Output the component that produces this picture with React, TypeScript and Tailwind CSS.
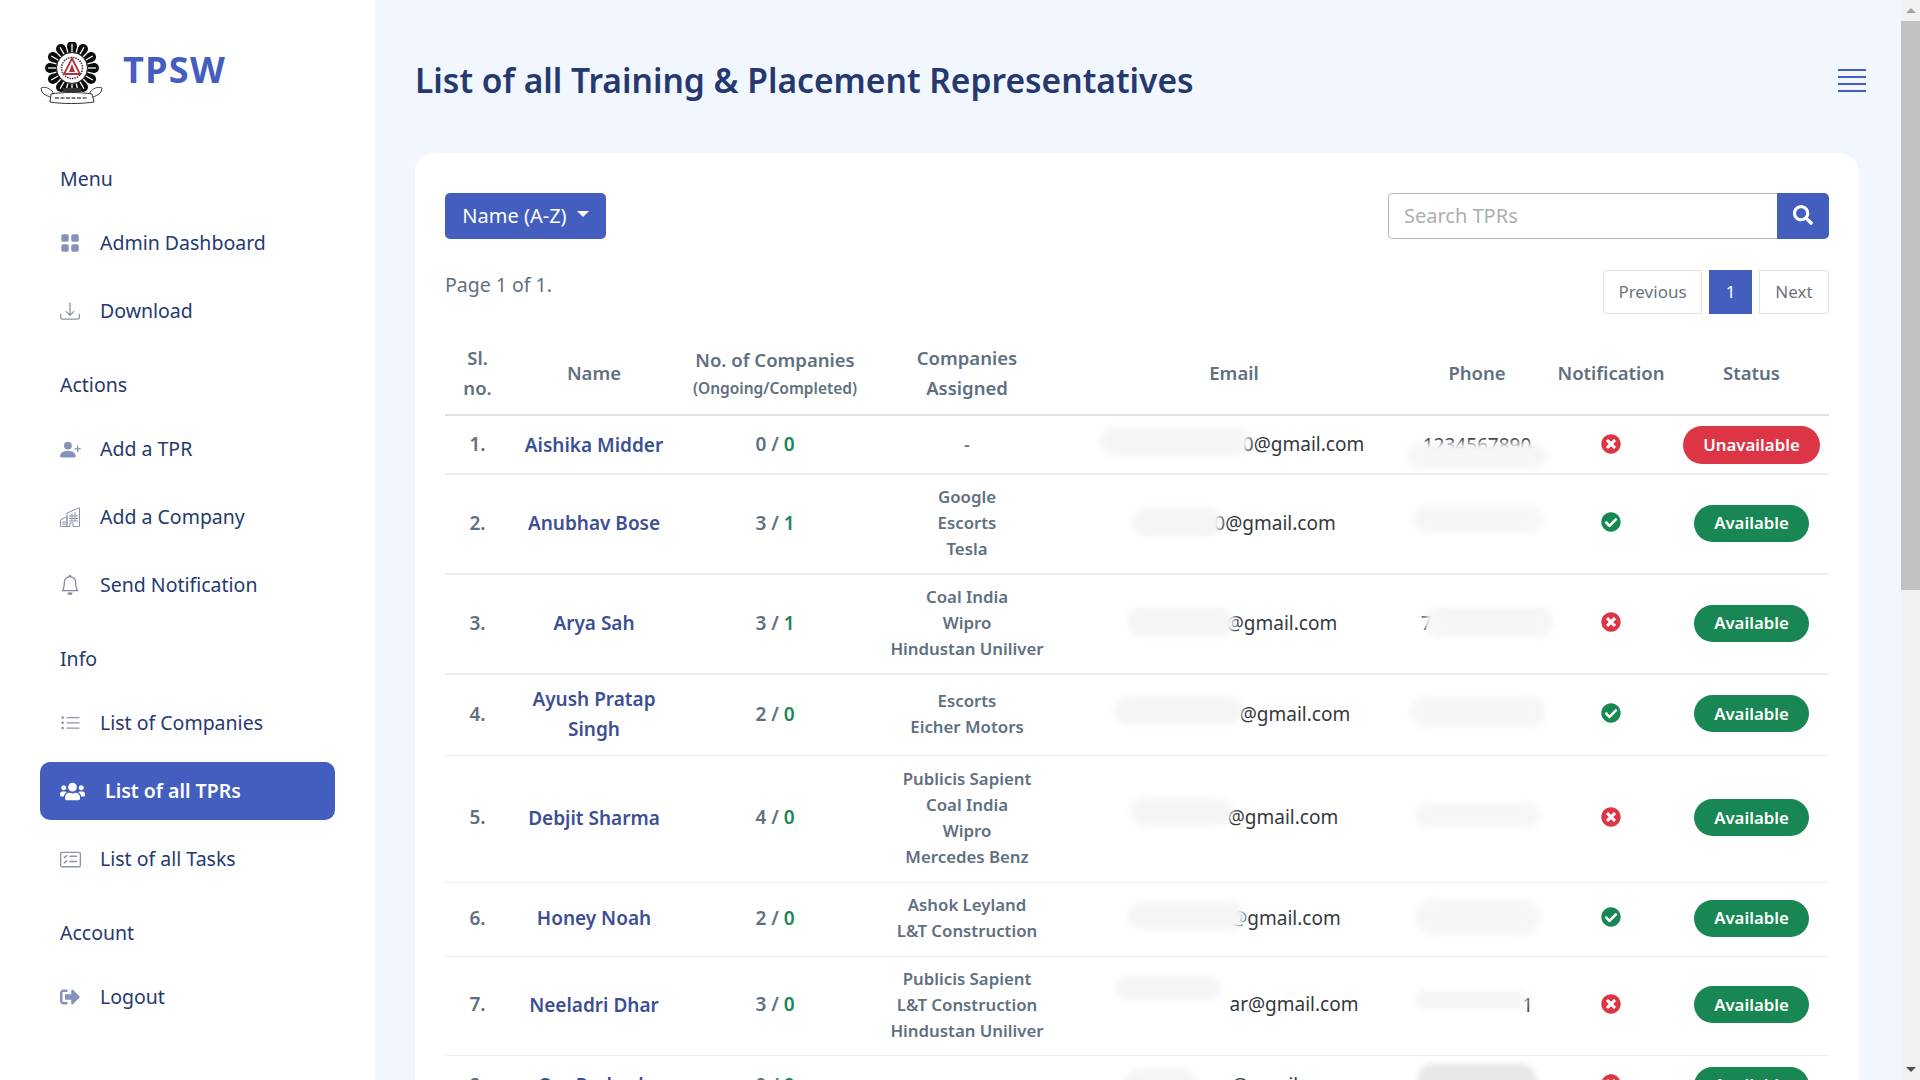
import { FaCheckCircle, FaSearch, FaSignOutAlt, FaTimesCircle, FaUsers } from 'react-icons/fa';
import { BsBell, BsCardChecklist, BsDownload, BsGridFill, BsListUl, BsPersonPlusFill } from 'react-icons/bs';

const font = "font-['Noto_Sans',sans-serif]";

function Logo() {
    const bumps = Array.from({ length: 12 }, (_, i) => (i * Math.PI) / 6);
    const spokes = Array.from({ length: 24 }, (_, i) => (i * Math.PI) / 12);
    return (
        <svg width="63" height="63" viewBox="0 0 63 63" className="shrink-0">
            {bumps.map((a) => (
                <circle key={a} cx={32 + 22 * Math.cos(a)} cy={26 + 22 * Math.sin(a)} r="5" fill="#0b0b0b" />
            ))}
            <circle cx="32" cy="26" r="22" fill="#0b0b0b" />
            {spokes.map((a) => (
                <line key={a} x1={32 + 16 * Math.cos(a)} y1={26 + 16 * Math.sin(a)} x2={32 + 24 * Math.cos(a)} y2={26 + 24 * Math.sin(a)} stroke="#fff" strokeWidth="1.3" />
            ))}
            <circle cx="32" cy="26" r="15.5" fill="#fff" stroke="#222" strokeWidth="1" />
            <circle cx="32" cy="26" r="10.5" fill="#fff" stroke="#444" strokeWidth="1.6" strokeDasharray="1.5 1" />
            <path d="M32 16.5 L40 32 H24 Z" fill="#fff" stroke="#b5303a" strokeWidth="1.8" />
            <path d="M32 22 L35 30 H29 Z" fill="#b5303a" />
            <path d="M23 46 H41 V50 H23 Z" fill="#333" />
            <path d="M1 46 C6 44 10 47 13 50 L12 56 C8 54 4 53 2 50 Z" fill="#fff" stroke="#333" strokeWidth="0.9" />
            <path d="M62 46 C57 44 53 47 50 50 L51 56 C55 54 59 53 61 50 Z" fill="#fff" stroke="#333" strokeWidth="0.9" />
            <path d="M11 52 C22 50 41 50 52 52 L54 60 C42 62 21 62 10 60 Z" fill="#fff" stroke="#333" strokeWidth="1" />
            <path d="M15 56 H48" stroke="#555" strokeWidth="1.6" strokeDasharray="4 1.5" />
        </svg>
    );
}

function BuildingIcon() {
    return (
        <svg width="20" height="20" viewBox="0 0 20 20" fill="none" stroke="#8b93ad" strokeWidth="1">
            <path d="M.5 19.5 V13 L7 9.5 V19.5 Z" />
            <path d="M7 19.5 V6 L19.5 .8 V19.5 H13 V16 H10 V19.5 Z" />
            <path d="M9 9 H18 M9 11.5 H18 M9 14 H18 M12 6 V14 M15 5 V14 M2 15 H6 M2 17 H6" />
        </svg>
    );
}

const menu = [
    {
        title: 'Menu',
        items: [
            { label: 'Admin Dashboard', icon: <BsGridFill size={20} className="text-[#8592bd]" /> },
            { label: 'Download', icon: <BsDownload size={20} className="text-[#8b93ad]" /> },
        ],
    },
    {
        title: 'Actions',
        items: [
            { label: 'Add a TPR', icon: <BsPersonPlusFill size={21} className="text-[#8592bd]" /> },
            { label: 'Add a Company', icon: <BuildingIcon /> },
            { label: 'Send Notification', icon: <BsBell size={20} className="text-[#7f879f]" /> },
        ],
    },
    {
        title: 'Info',
        items: [
            { label: 'List of Companies', icon: <BsListUl size={21} className="text-[#8b93ad]" /> },
            { label: 'List of all TPRs', active: true, icon: <FaUsers size={25} className="text-white" /> },
            { label: 'List of all Tasks', icon: <BsCardChecklist size={21} className="text-[#8b93ad]" /> },
        ],
    },
    {
        title: 'Account',
        items: [{ label: 'Logout', icon: <FaSignOutAlt size={20} className="text-[#8592bd]" /> }],
    },
];

function Sidebar() {
    return (
        <aside className="w-[375px] shrink-0 bg-white">
            <div className="h-[144px] flex items-start pl-10 pt-[42px] gap-5">
                <Logo />
                <div className="font-['Open_Sans',sans-serif] font-bold text-[36px] leading-[56px] tracking-[1.2px] text-[#435ebe]">TPSW</div>
            </div>
            {menu.map((s) => (
                <div key={s.title}>
                    <div className="h-[70px] flex items-center pl-[60px] text-[19.5px] text-[#25396f]">{s.title}</div>
                    {s.items.map((it) =>
                        it.active ? (
                            <div key={it.label} className="ml-10 w-[295px] h-[58px] mb-[10px] pl-5 flex items-center gap-5 rounded-[10px] bg-[#435ebe] text-white font-semibold text-[19.5px]">
                                {it.icon}
                                <span>{it.label}</span>
                            </div>
                        ) : (
                            <div key={it.label} className="ml-10 w-[295px] h-[58px] mb-[10px] pl-5 flex items-center text-[19.5px] text-[#25396f]">
                                <span className="w-10 flex items-center">{it.icon}</span>
                                <span>{it.label}</span>
                            </div>
                        ),
                    )}
                </div>
            ))}
        </aside>
    );
}

const rows = [
    { name: 'Aishika Midder', a: 0, b: 0, companies: ['-'], mail: '0@gmail.com', mailPad: 'pl-[139px]', mailBlot: 'w-[150px] -left-[4px] -top-[3px] h-[28px]', phone: '1234567890', phoneAlign: 'justify-center', phoneBlot: 'w-[140px] -left-[14px] top-[11px] h-[26px]', notify: false, available: false, h: 'h-[59px]', line: 'border-b-2' },
    { name: 'Anubhav Bose', a: 3, b: 1, companies: ['Google', 'Escorts', 'Tesla'], mail: '0@gmail.com', mailPad: 'pl-[82px]', mailBlot: 'w-[90px] left-0 -top-[2px] h-[30px]', phone: '', phoneAlign: 'justify-center', phoneBlot: 'w-[130px] -left-[8px] -top-[4px] h-[26px]', notify: true, available: true, h: 'h-[100px]', line: 'border-b-2 [&>td]:pb-[2px]' },
    { name: 'Arya Sah', a: 3, b: 1, companies: ['Coal India', 'Wipro', 'Hindustan Uniliver'], mail: '@gmail.com', mailPad: 'pl-[96px]', mailBlot: 'w-[108px] -left-[4px] -top-[2px] h-[30px]', phone: '7', phoneAlign: 'justify-start', phoneBlot: 'w-[130px] left-[3px] -top-[3px] h-[30px]', notify: false, available: true, h: 'h-[100px]', line: 'border-b-2 [&>td]:pb-[2px]' },
    { name: 'Ayush Pratap Singh', a: 2, b: 0, companies: ['Escorts', 'Eicher Motors'], mail: '@gmail.com', mailPad: 'pl-[122px]', mailBlot: 'w-[128px] -left-[4px] -top-[3px] h-[28px]', phone: '', phoneAlign: 'justify-center', phoneBlot: 'w-[135px] -left-[10px] -top-[4px] h-[30px]', notify: true, available: true, h: 'h-[81px]', line: 'border-b [&>td]:pb-[2px]' },
    { name: 'Debjit Sharma', a: 4, b: 0, companies: ['Publicis Sapient', 'Coal India', 'Wipro', 'Mercedes Benz'], mail: '@gmail.com', mailPad: 'pl-[98px]', mailBlot: 'w-[102px] left-0 -top-[5px] h-[28px]', phone: '', phoneAlign: 'justify-center', phoneBlot: 'w-[125px] -left-[6px] -top-[2px] h-[24px]', notify: false, available: true, h: 'h-[127px]', line: 'border-b [&>td]:pb-[2px]' },
    { name: 'Honey Noah', a: 2, b: 0, companies: ['Ashok Leyland', 'L&T Construction'], mail: '@gmail.com', mailPad: 'pl-[103px]', mailBlot: 'w-[118px] left-0 -top-[2px] h-[28px]', phone: '', phoneAlign: 'justify-center', phoneBlot: 'w-[125px] -left-[6px] -top-[6px] h-[36px]', notify: true, available: true, h: 'h-[74px]', line: 'border-b [&>td]:pb-[2px]' },
    { name: 'Neeladri Dhar', a: 3, b: 0, companies: ['Publicis Sapient', 'L&T Construction', 'Hindustan Uniliver'], mail: 'ar@gmail.com', mailPad: 'pl-[120px]', mailBlot: 'w-[105px] left-[6px] -top-[14px] h-[24px]', phone: '1', phoneAlign: 'justify-end', phoneBlot: 'w-[112px] -left-[6px] -top-[2px] h-[20px]', notify: false, available: true, h: 'h-[99px]', line: 'border-b [&>td]:pb-[2px]' },
    { name: 'Om Prakash', a: 0, b: 0, companies: ['-'], mail: '@gmail.com', mailPad: 'pl-[105px]', mailBlot: 'w-[70px] left-0 -top-[2px] h-[26px]', phone: '', phoneAlign: 'justify-center', phoneBlot: 'w-[120px] -left-[4px] -top-[8px] h-[34px] !bg-[#e6e6e8]', notify: false, available: true, h: 'h-[60px]', line: 'border-b' },
];

function TprTable() {
    return (
        <table className="w-full table-fixed border-collapse mt-4 text-[#607080]">
            <colgroup>
                <col className="w-[65px]" />
                <col className="w-[168px]" />
                <col className="w-[194px]" />
                <col className="w-[190px]" />
                <col className="w-[344px]" />
                <col className="w-[142px]" />
                <col className="w-[126px]" />
                <col className="w-[155px]" />
            </colgroup>
            <thead>
                <tr className="h-[85px] border-b-2 border-[#dee2e6] text-[18.5px] leading-[30px]">
                    <th className="pt-[2px] font-semibold">Sl.<br />no.</th>
                    <th className="pt-[2px] font-semibold">Name</th>
                    <th className="pt-[2px] font-semibold">No. of Companies<br /><span className="block text-[15.5px] leading-[26px]">(Ongoing/Completed)</span></th>
                    <th className="pt-[2px] font-semibold">Companies<br />Assigned</th>
                    <th className="pt-[2px] font-semibold">Email</th>
                    <th className="pt-[2px] font-semibold">Phone</th>
                    <th className="pt-[2px] font-semibold">Notification</th>
                    <th className="pt-[2px] font-semibold">Status</th>
                </tr>
            </thead>
            <tbody>
                {rows.map((r, i) => (
                    <tr key={r.name} className={`${r.h} ${r.line} border-[#eceef0] text-center align-middle`}>
                        <td className="text-[19px] font-semibold">{i + 1}.</td>
                        <td className="px-2 text-[19px] leading-[30px] font-semibold text-[#3d4f93]">{r.name}</td>
                        <td className="text-[19px] font-semibold">{r.a} / <span className="text-[#198754]">{r.b}</span></td>
                        <td className="text-[16.8px] leading-[26px] font-semibold">
                            {r.companies.map((c) => <div key={c}>{c}</div>)}
                        </td>
                        <td className="text-[19px] text-[#33383e]">
                            <span className={`relative inline-block ${r.mailPad}`}>
                                {r.mail}
                                <span className={`absolute rounded-full bg-[#f5f5f6] blur-[3px] ${r.mailBlot}`} />
                            </span>
                        </td>
                        <td className="text-[19px] text-[#33383e]">
                            <span className={`relative mx-auto flex w-[112px] h-[26px] leading-[26px] ${r.phoneAlign}`}>
                                {r.phone}
                                <span className={`absolute rounded-full bg-[#f6f6f8] blur-[3px] ${r.phoneBlot}`} />
                            </span>
                        </td>
                        <td>
                            <span className="flex justify-center -mt-[2px]">
                                {r.notify ? <FaCheckCircle size={20} className="text-[#198754]" /> : <FaTimesCircle size={20} className="text-[#dc3545]" />}
                            </span>
                        </td>
                        <td>
                            {r.available ? (
                                <span className="inline-flex items-center h-[37px] px-5 rounded-full bg-[#198754] text-white text-[16.8px] font-semibold">Available</span>
                            ) : (
                                <span className="inline-flex items-center h-[38px] px-5 rounded-full bg-[#dc3545] text-white text-[16.8px] font-semibold">Unavailable</span>
                            )}
                        </td>
                    </tr>
                ))}
            </tbody>
        </table>
    );
}

function Scrollbar() {
    return (
        <div className="w-[19px] shrink-0 h-full bg-[#f1f1f1] flex flex-col items-center">
            <div className="h-[21px] flex items-center justify-center">
                <div className="w-0 h-0 border-x-[5px] border-x-transparent border-b-[5px] border-b-[#a3a3a3]" />
            </div>
            <div className="w-full h-[569px] bg-[#c1c1c1]" />
            <div className="flex-1" />
            <div className="h-[21px] flex items-center justify-center">
                <div className="w-0 h-0 border-x-[5px] border-x-transparent border-t-[5px] border-t-[#505050]" />
            </div>
        </div>
    );
}

export default function App() {
    return (
        <div className={`h-screen overflow-hidden flex bg-[#f2f7ff] ${font}`}>
            <Sidebar />
            <main className="flex-1 min-w-0 h-full overflow-hidden">
                <div className="h-[153px] pt-10 pb-[33px] pl-10 pr-[35px] flex items-center justify-between">
                    <h1 className="text-[33.6px] font-semibold text-[#25396f]">List of all Training &amp; Placement Representatives</h1>
                    <div className="w-[28px] flex flex-col gap-[5px]">
                        <div className="h-[2px] bg-[#435ebe]" />
                        <div className="h-[2px] bg-[#435ebe]" />
                        <div className="h-[2px] bg-[#435ebe]" />
                        <div className="h-[2px] bg-[#435ebe]" />
                    </div>
                </div>
                <section className="ml-10 mr-[42px] bg-white rounded-[20px] pt-10 px-[30px]">
                    <div className="flex justify-between h-[46px]">
                        <button className="w-[161px] h-[46px] rounded-[5px] bg-[#435ebe] text-white text-[20px] flex items-center justify-center gap-[10px]">
                            Name (A-Z)
                            <span className="w-0 h-0 -mt-[4px] border-x-[6px] border-x-transparent border-t-[6px] border-t-white" />
                        </button>
                        <div className="flex w-[441px]">
                            <input placeholder="Search TPRs" className="flex-1 min-w-0 h-[46px] pb-[2px] border border-[#b5b8bb] border-r-0 rounded-l-[5px] px-[15px] text-[20px] outline-none placeholder:text-[#a9afb5]" />
                            <button className="w-[52px] h-[46px] rounded-r-[5px] bg-[#435ebe] flex items-center justify-center -ml-[1px]">
                                <FaSearch size={20} className="text-white -mt-[2px]" />
                            </button>
                        </div>
                    </div>
                    <div className="flex justify-between mt-[31px]">
                        <div className="text-[19.5px] leading-[30px] text-[#607080]">Page 1 of 1.</div>
                        <div className="flex gap-[7px] h-[44px] text-[17px]">
                            <div className="w-[99px] flex items-center justify-center border border-[#dee2e6] rounded-l-[4px] text-[#6c757d]">Previous</div>
                            <div className="w-[43px] flex items-center justify-center bg-[#435ebe] text-white">1</div>
                            <div className="w-[70px] flex items-center justify-center border border-[#dee2e6] rounded-r-[4px] text-[#6c757d]">Next</div>
                        </div>
                    </div>
                    <TprTable />
                </section>
            </main>
            <Scrollbar />
        </div>
    );
}
